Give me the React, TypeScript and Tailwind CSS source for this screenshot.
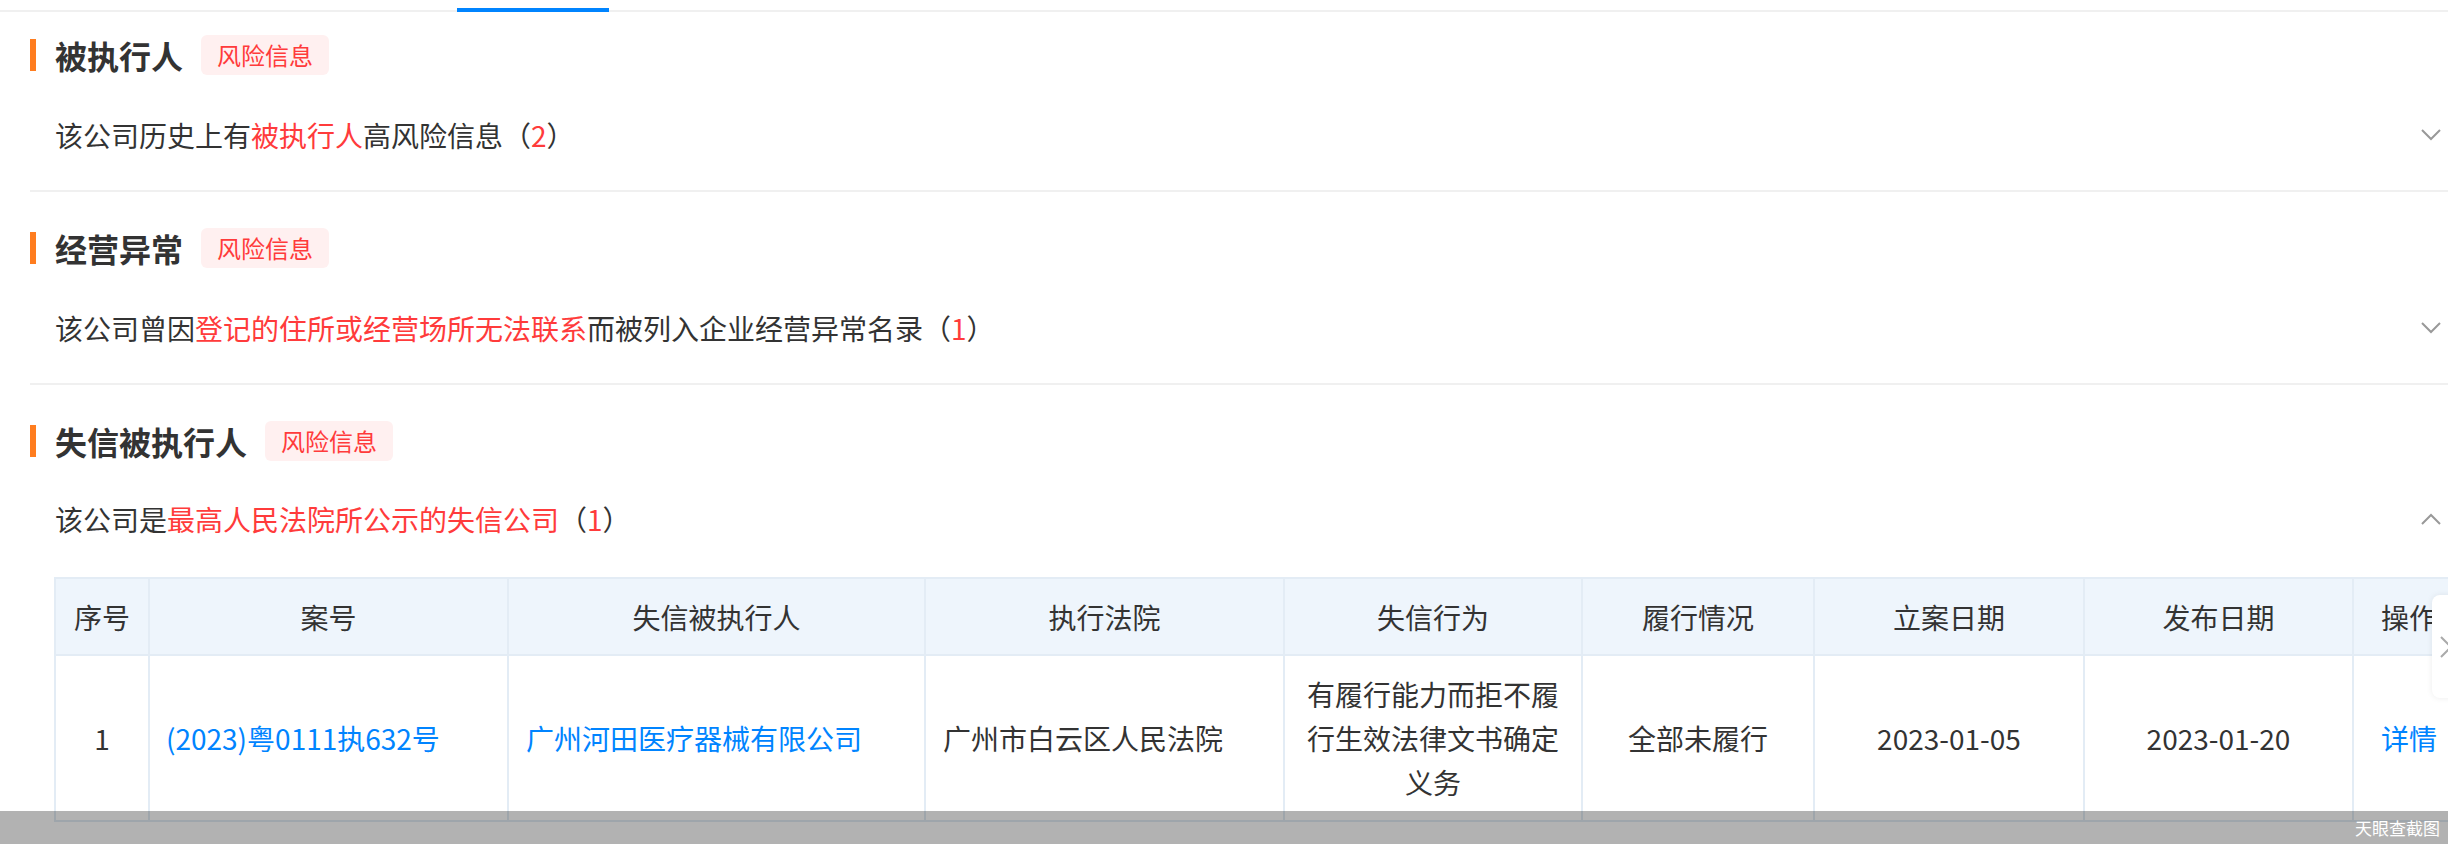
import React from "react"

type Part = [string, boolean]

const sections: { title: string; parts: Part[]; open: boolean }[] = [
  {
    title: "被执行人",
    parts: [
      ["该公司历史上有", false],
      ["被执行人", true],
      ["高风险信息（", false],
      ["2", true],
      ["）", false],
    ],
    open: false,
  },
  {
    title: "经营异常",
    parts: [
      ["该公司曾因", false],
      ["登记的住所或经营场所无法联系", true],
      ["而被列入企业经营异常名录（", false],
      ["1", true],
      ["）", false],
    ],
    open: false,
  },
  {
    title: "失信被执行人",
    parts: [
      ["该公司是", false],
      ["最高人民法院所公示的失信公司", true],
      ["（", false],
      ["1", true],
      ["）", false],
    ],
    open: true,
  },
]

const headers = ["序号", "案号", "失信被执行人", "执行法院", "失信行为", "履行情况", "立案日期", "发布日期", "操作"]

function Chevron({ up }: { up?: boolean }) {
  return (
    <svg width="20" height="12" viewBox="0 0 20 12" className="shrink-0">
      <polyline
        points={up ? "1,11 10,2 19,11" : "1,1 10,10 19,1"}
        fill="none"
        stroke="#999"
        strokeWidth="2"
      />
    </svg>
  )
}

function Table() {
  const cell = "border-r-2 border-b-2 border-[#e3ecf5] flex items-center"
  return (
    <div className="ml-[24px] mt-[38px] border-l-2 border-t-2 border-[#e3ecf5] grid grid-cols-[94px_359px_417px_359px_298px_232px_270px_269px_112px] w-max text-[28px] text-[#333]">
      {headers.map((h) => (
        <div key={h} className={`${cell} h-[77px] justify-center bg-[#eef5fc] whitespace-nowrap`}>
          {h}
        </div>
      ))}
      <div className={`${cell} h-[166px] justify-center`}>1</div>
      <div className={`${cell} pl-[16px] text-[#0084ff] whitespace-nowrap`}>(2023)粤0111执632号</div>
      <div className={`${cell} pl-[17px] text-[#0084ff] whitespace-nowrap`}>广州河田医疗器械有限公司</div>
      <div className={`${cell} pl-[17px] whitespace-nowrap`}>广州市白云区人民法院</div>
      <div className={`${cell} justify-center px-[18px] text-center leading-[44px]`}>
        有履行能力而拒不履行生效法律文书确定义务
      </div>
      <div className={`${cell} justify-center`}>全部未履行</div>
      <div className={`${cell} justify-center`}>2023-01-05</div>
      <div className={`${cell} justify-center`}>2023-01-20</div>
      <div className={`${cell} justify-center text-[#0084ff]`}>详情</div>
    </div>
  )
}

export default function App() {
  return (
    <div className="relative h-[844px] w-[2448px] overflow-hidden bg-white font-['Noto_Sans_CJK_SC','PingFang_SC',sans-serif]">
      {/* tab strip */}
      <div className="grid h-[12px]">
        <div className="col-start-1 row-start-1 self-end h-[2px] bg-[#f0f0f0]" />
        <div className="col-start-1 row-start-1 self-end ml-[457px] w-[152px] h-[4px] bg-[#0084ff]" />
      </div>

      <div className="ml-[30px]">
        {sections.map((s, i) => (
          <div
            key={s.title}
            className={`${i === 0 ? "pt-[23px]" : "pt-[36px]"} ${s.open ? "" : "pb-[35px] border-b-2 border-[#f0f0f0]"}`}
          >
            <div className="flex items-center h-[40px]">
              <div className="w-[6px] h-[32px] bg-[#ff7d1f]" />
              <h2 className="ml-[19px] text-[32px] font-bold text-[#333] leading-none">{s.title}</h2>
              <span className="ml-[18px] h-[40px] px-[16px] flex items-center rounded-[6px] bg-[#fff0f0] text-[24px] text-[#ff3b3b]">
                风险信息
              </span>
            </div>
            <div className={`${s.open ? "mt-[38px]" : "mt-[40px]"} h-[40px] flex items-center justify-between pl-[25px] pr-[7px]`}>
              <p className="text-[28px] text-[#333] leading-[40px] whitespace-nowrap">
                {s.parts.map(([t, red], k) => (
                  <span key={k} className={red ? "text-[#ff3b3b]" : ""}>
                    {t}
                  </span>
                ))}
              </p>
              <Chevron up={s.open} />
            </div>
            {s.open && <Table />}
          </div>
        ))}
      </div>

      {/* table scroll button */}
      <div className="absolute left-[2432px] top-[595px] w-[40px] h-[103px] rounded-[8px] bg-white shadow-[0_0_6px_rgba(0,0,0,0.08)] flex items-center pl-[8px]">
        <svg width="12" height="22" viewBox="0 0 12 22">
          <polyline points="1,1 11,11 1,21" fill="none" stroke="#aaa" strokeWidth="2" />
        </svg>
      </div>

      {/* screenshot watermark bar */}
      <div className="absolute left-0 right-0 bottom-0 h-[33px] bg-black/30 flex items-center justify-end pr-[8px]">
        <span className="text-[17px] text-white leading-none">天眼查截图</span>
      </div>
    </div>
  )
}
